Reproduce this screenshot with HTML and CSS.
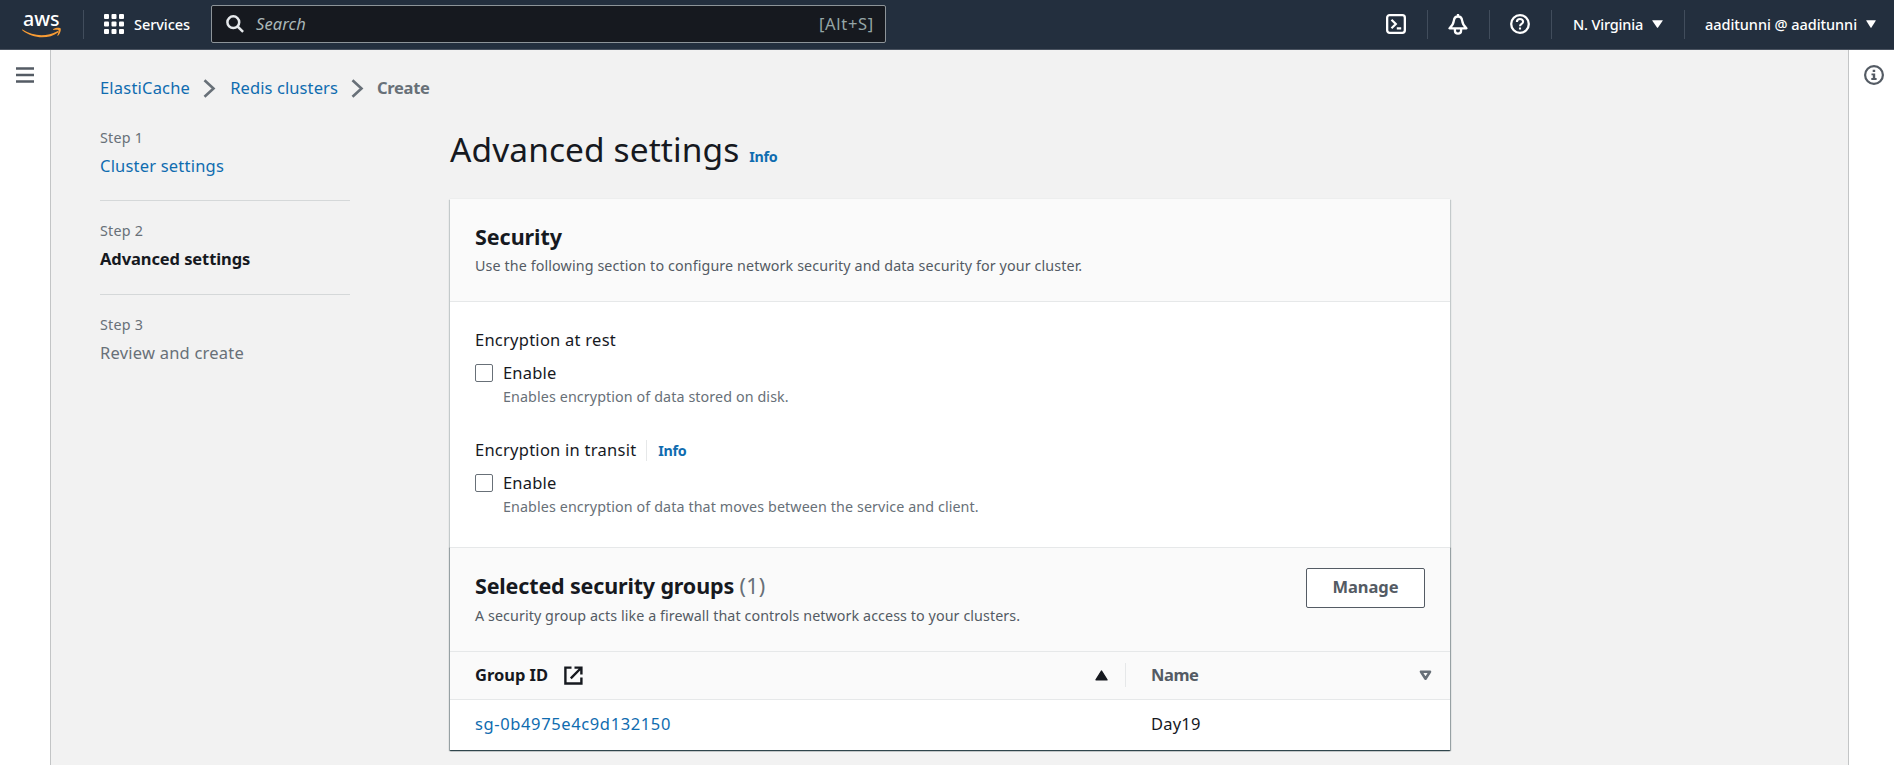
FILE: index.html
```
<!DOCTYPE html>
<html lang="en">
<head>
<meta charset="utf-8">
<title>Create Redis cluster - ElastiCache</title>
<link rel="stylesheet" href="styles.css">
</head>
<body>
<header class="topbar">
  <svg class="logo" width="40" height="36" viewBox="0 -8 40 36">
    <text class="logo-text" x="1" y="11.5" textLength="36.5" lengthAdjust="spacingAndGlyphs">aws</text>
    <path d="M.5 15.600c11 7.200 24.500 7.400 34.800 1.600.9-.4 1.500.5.8 1.200C27 25.300 11 25.200.2 16.300c-.4-.4-.1-1 .3-.7z" fill="#f79b34"/>
    <path d="M31.300 15.100c2.600-1.700 6.700-1.600 7.300-.7.6 1-.2 5.200-2.700 7.300-.4.3-.8.100-.6-.3.600-1.400 1.700-4.500 1.200-5.200-.6-.7-3.500-.4-4.900-.3-.5 0-.6-.5-.3-.8z" fill="#f79b34"/>
  </svg>
  <span class="vbar vbar-logo"></span>
  <div class="services">
    <svg width="20" height="20" viewBox="0 0 20 20" fill="#fff">
      <rect width="5" height="5" rx="1"/><rect x="7.500" width="5" height="5" rx="1"/><rect x="15" width="5" height="5" rx="1"/>
      <rect y="7.500" width="5" height="5" rx="1"/><rect x="7.500" y="7.500" width="5" height="5" rx="1"/><rect x="15" y="7.500" width="5" height="5" rx="1"/>
      <rect y="15" width="5" height="5" rx="1"/><rect x="7.500" y="15" width="5" height="5" rx="1"/><rect x="15" y="15" width="5" height="5" rx="1"/>
    </svg>
    <span>Services</span>
  </div>
  <div class="search">
    <svg width="18" height="18" viewBox="0 0 18 18" fill="none" stroke="#e6e9ec" stroke-width="2.500"><circle cx="7.300" cy="7.200" r="5.900"/><path d="M11.600 11.500l5.500 5.300"/></svg>
    <span class="search-placeholder">Search</span>
    <span class="search-key">[Alt+S]</span>
  </div>
  <nav class="tools">
    <span class="tool">
      <svg width="20" height="20" viewBox="0 0 20 20" fill="none" stroke="#fff" stroke-width="2.300"><rect x="1.150" y="1.150" width="17.700" height="17.700" rx="2.500"/><path d="M5.500 5.800l4.300 4.200-4.300 4.200M10.800 14.300h4.400" stroke-width="2.200"/></svg>
    </span>
    <span class="vbar"></span>
    <span class="tool">
      <svg width="20" height="21" viewBox="0 0 20 21" fill="none" stroke="#fff" stroke-width="2.300" stroke-linejoin="round"><path d="M10 0v2.500M10 2.500c-2.500 0-3.900 1.800-4.200 4.400C5.400 10.300 4.300 12 1.500 14.300h17c-2.800-2.300-3.900-4-4.300-7.400-.3-2.600-1.700-4.400-4.200-4.400zM6.900 14.800v1.600c0 1.900 1.300 3.200 3.100 3.200s3.100-1.300 3.100-3.200v-1.600"/></svg>
    </span>
    <span class="vbar"></span>
    <span class="tool">
      <svg width="20" height="20" viewBox="0 0 20 20" fill="none" stroke="#fff" stroke-width="2.300"><circle cx="10" cy="10" r="8.800"/><path d="M6.900 8c0-1.900 1.300-3 3.100-3s3.100 1.100 3.100 2.700c0 2.200-3.100 2.300-3.100 4.600M10 13.400v2.200" stroke-width="2.100"/></svg>
    </span>
    <span class="vbar"></span>
    <span class="menu region">N. Virginia<svg width="11" height="8" viewBox="0 0 11 8"><path d="M.7.2h9.600q.7 0 .4.600L6 7.600q-.5.600-1 0L.3.800Q0 .2.700.2z" fill="#fff"/></svg></span>
    <span class="vbar"></span>
    <span class="menu account">aaditunni @ aaditunni<svg width="10" height="8" viewBox="0 0 11 8" preserveAspectRatio="none"><path d="M.7.2h9.600q.7 0 .4.600L6 7.600q-.5.600-1 0L.3.800Q0 .2.700.2z" fill="#fff"/></svg></span>
  </nav>
</header>
<div class="shell">
  <aside class="rail rail-left">
    <svg width="18" height="16" viewBox="0 0 18 16" stroke="#545b64" stroke-width="2.400"><path d="M0 1.500h18M0 8h18M0 14.500h18"/></svg>
  </aside>
  <main class="content">
    <nav class="breadcrumb">
      <a>ElastiCache</a>
      <svg width="13" height="19" viewBox="0 0 13 19" fill="none" stroke="#687078" stroke-width="2.600"><path d="M1.500 1.200l9 8.300-9 8.300"/></svg>
      <a class="crumb-2">Redis clusters</a>
      <svg width="13" height="19" viewBox="0 0 13 19" fill="none" stroke="#687078" stroke-width="2.600"><path d="M1.500 1.200l9 8.300-9 8.300"/></svg>
      <b>Create</b>
    </nav>
    <div class="columns">
      <ol class="steps">
        <li><small>Step 1</small><a>Cluster settings</a></li>
        <li class="current"><small>Step 2</small><span>Advanced settings</span></li>
        <li class="later"><small>Step 3</small><span>Review and create</span></li>
      </ol>
      <section class="page">
        <div class="title"><h1>Advanced settings</h1><a class="info">Info</a></div>
        <div class="card">
          <div class="security">
            <div class="card-head">
              <h2>Security</h2>
              <p>Use the following section to configure network security and data security for your cluster.</p>
            </div>
            <div class="fields">
              <div class="field">
                <div class="label">Encryption at rest</div>
                <label class="check"><i class="box"></i><span>Enable</span></label>
                <p class="hint">Enables encryption of data stored on disk.</p>
              </div>
              <div class="field">
                <div class="label">Encryption in transit<a class="info">Info</a></div>
                <label class="check"><i class="box"></i><span>Enable</span></label>
                <p class="hint">Enables encryption of data that moves between the service and client.</p>
              </div>
            </div>
          </div>
          <div class="groups">
            <div class="card-head groups-head">
              <div>
                <h2>Selected security groups <span class="count">(1)</span></h2>
                <p class="groups-desc">A security group acts like a firewall that controls network access to your clusters.</p>
              </div>
              <button class="manage">Manage</button>
            </div>
            <div class="row row-head">
              <div class="cell cell-id">
                <b>Group ID</b>
                <svg class="ext" width="19" height="19" viewBox="0 0 19 19" fill="none" stroke="#16191f" stroke-width="2.400"><path d="M7.500 1.600H1.400v15.900h16v-6M10.500 1.600h6.900v6.900M17 2L6.800 12.300"/></svg>
                <svg class="sort" width="13" height="11" viewBox="0 0 13 11"><path d="M6.500 1L12 9.800H1z" fill="#16191f" stroke="#16191f" stroke-width="1.400" stroke-linejoin="round"/></svg>
              </div>
              <div class="cell cell-name">
                <b class="muted">Name</b>
                <svg class="sort" width="13" height="11" viewBox="0 0 13 11"><path d="M2 1.700h9L6.500 8.700z" fill="none" stroke="#687078" stroke-width="2.600" stroke-linejoin="round"/></svg>
              </div>
            </div>
            <div class="row row-data">
              <div class="cell cell-id"><a class="group-link">sg-0b4975e4c9d132150</a></div>
              <div class="cell cell-name">Day19</div>
            </div>
          </div>
        </div>
      </section>
    </div>
  </main>
  <aside class="rail rail-right">
    <svg width="20" height="20" viewBox="0 0 20 20"><circle cx="10" cy="10" r="8.900" fill="none" stroke="#545b64" stroke-width="2.200"/><path d="M8.700 4.800h2.500v2.300H8.700zM7.500 8.400h3.700v4.700h1.400v1.900H7.300v-1.900h1.500v-2.800H7.500z" fill="#545b64"/></svg>
  </aside>
</div>
</body>
</html>
```
FILE: styles.css
```
* { box-sizing: border-box; }

body {
  margin: 0;
  height: 765px;
  overflow: hidden;
  display: flex;
  flex-direction: column;
  background: #f2f2f2;
  color: #16191f;
  font: 16.5px/28px "Noto Sans", sans-serif;
  letter-spacing: .2px;
}

h1, h2, p, ol { margin: 0; padding: 0; font-weight: 400; }
svg { display: block; flex: none; }
b { font-weight: 700; letter-spacing: -.03px; }
a { color: #0f6cb0; }

/* top bar */
.topbar {
  flex: none;
  height: 50px;
  display: flex;
  align-items: center;
  padding: 0 18px 1px 22px;
  background: #232f3e;
  border-bottom: 1px solid #4a5360;
  color: #fff;
  font-size: 14.5px;
  font-weight: 500;
  letter-spacing: -.05px;
}
.logo-text { font: 500 19px "Noto Sans", sans-serif; fill: #fff; }
.vbar { flex: none; width: 1px; height: 29px; background: #414d5c; }
.vbar-logo { margin-left: 21px; }
.services { display: flex; align-items: center; gap: 10px; margin-left: 20px; width: 107px; }
.search {
  width: 675px;
  height: 38px;
  display: flex;
  align-items: center;
  padding: 0 11px 0 14px;
  background: #16191f;
  border: 1px solid #8d9499;
  border-radius: 2px;
  font-size: 16.5px;
  font-weight: 400;
}
.search-placeholder { margin-left: 12px; font-style: italic; color: #aab7b8; letter-spacing: .1px; }
.search-key { margin-left: auto; color: #95a5a6; letter-spacing: .7px; }
.tools { display: flex; align-items: center; margin-left: auto; }
.tool { width: 61px; display: flex; justify-content: center; }
.menu { display: flex; align-items: center; gap: 9px; }
.region { padding: 0 21px 0 21px; letter-spacing: -.18px; }
.account { padding-left: 20px; }

/* page frame */
.shell { flex: 1; display: flex; min-height: 0; }
.rail { flex: none; display: flex; justify-content: center; background: #fff; }
.rail-left { width: 51px; padding-top: 17px; border-right: 1px solid #c3c5c6; }
.rail-right { width: 46px; padding: 15px 0 0 5px; border-left: 1px solid #c3c5c6; }
.content { flex: 1; padding: 24px 0 0 49px; }

.breadcrumb { display: flex; align-items: center; height: 28px; }
.breadcrumb svg { margin: 1px 14px 0 13px; }
.breadcrumb .crumb-2 { letter-spacing: .1px; }
.breadcrumb b { margin-left: -1px; color: #687078; letter-spacing: -.3px; }

.columns { display: flex; gap: 99px; }

/* wizard steps */
.steps { flex: none; width: 250px; list-style: none; padding-top: 26px; }
.steps li { display: flex; flex-direction: column; padding-bottom: 20px; margin-bottom: 20px; border-bottom: 1px solid #d5d8d9; }
.steps li + li { padding-bottom: 21px; }
.steps li:last-child { border: 0; }
.steps small { font-size: 14.3px; line-height: 20px; color: #687078; letter-spacing: .21px; margin-bottom: 4px; }
.current span { font-weight: 700; letter-spacing: -.09px; }
.later span { color: #687078; letter-spacing: .22px; }

/* main column */
.page { width: 1001px; padding-top: 24px; }
.title { display: flex; align-items: baseline; gap: 10px; height: 73px; padding-left: 1px; }
.title h1 { font-size: 33.5px; line-height: 46px; letter-spacing: .08px; }
.info { font-size: 14.3px; font-weight: 700; line-height: 20px; letter-spacing: -.33px; }

.card { background: #fff; margin-left: 1px; }
.security { box-shadow: 0 0 1px 0 #d5dbdb, 1px 1px 1px 0 #001c2433, -1px 1px 1px 0 #001c2433; }
.card-head { padding: 24px 25px 0; height: 103px; background: #fafafa; border-bottom: 1px solid #e6e8e9; }
h2 { font-size: 21.5px; font-weight: 700; line-height: 28px; letter-spacing: -.05px; }
.card-head p { font-size: 14.3px; line-height: 20px; color: #545b64; margin-top: 5px; letter-spacing: .11px; }
.card-head .groups-desc { letter-spacing: .08px; margin-top: 6px; }
.fields { padding: 24px 25px 0; height: 245px; display: flex; flex-direction: column; gap: 24px; }
.field { height: 86px; }
.label { display: flex; align-items: center; letter-spacing: .25px; }
.label .info { margin-left: 10px; padding: 1px 0 0 11px; border-left: 1px solid #e6e8e9; }
.check { display: flex; align-items: center; gap: 10px; margin-top: 5px; }
.box { width: 18px; height: 18px; border: 1px solid #687078; border-radius: 2px; background: #fff; }
.hint { margin: 0 0 0 28px; font-size: 14.3px; line-height: 20px; color: #687078; letter-spacing: .1px; }

/* security groups */
.groups { position: relative; border-top: 1px solid #e6e8e9; box-shadow: 0 1px 1px 0 #001c2499, 1px 1px 1px 0 #001c244d, -1px 1px 1px 0 #001c244d; background: #fff; }
.groups h2 { letter-spacing: -.16px; }
.groups-head { display: flex; justify-content: space-between; align-items: flex-start; height: 104px; padding-top: 20px; }
.groups-head > div { padding-top: 4px; }
.groups h2 .count { font-weight: 400; color: #687078; letter-spacing: .27px; }
.manage { width: 119px; height: 40px; border: 1px solid #545b64; border-radius: 2px; background: #fff; color: #545b64; font: 700 16.5px/20px "Noto Sans", sans-serif; letter-spacing: -.04px; padding: 0 0 2px; }
.row { display: flex; }
.row-head { height: 48px; padding: 11px 0 12px; background: #fafafa; border-bottom: 1px solid #e6e8e9; }
.row-head svg { margin-top: 1px; }
.row-data { height: 50px; align-items: center; padding-bottom: 3px; }
.cell { display: flex; align-items: center; height: 24px; }
.cell-id { width: 675px; padding: 0 17px 0 25px; }
.cell-name { flex: 1; padding: 0 18px 0 25px; border-left: 1px solid transparent; }
.row-head .cell-name { border-color: #e6e8e9; }
.ext { margin-left: 16px; }
.sort { margin-left: auto; }
.muted { color: #545b64; letter-spacing: -.45px; }
.group-link { letter-spacing: .62px; }
```
